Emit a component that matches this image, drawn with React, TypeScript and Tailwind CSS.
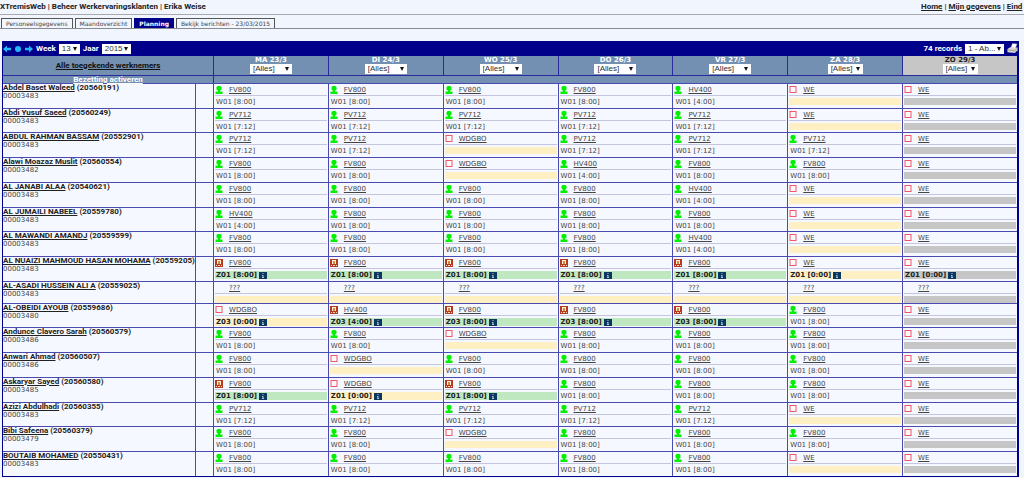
import { clsx } from "clsx";

type Status = "present" | "absent" | "free" | "none";

type Entry = {
  status: Status;
  code: string;
  hours?: string;
  booked?: boolean;
};

type Employee = {
  name: string;
  id: string;
  unit: string;
  days: Entry[];
};

const work = (code: string, time: string): Entry => ({ status: "present", code, hours: `W01 [${time}]` });
const sick = (code: string, hours: string): Entry => ({ status: "absent", code, hours, booked: true });
const free = (code: string, hours?: string): Entry => ({ status: "free", code, hours, booked: true });

const fv = work("FV800", "8:00");
const pv = work("PV712", "7:12");
const hv = work("HV400", "4:00");
const we = free("WE");
const wd = free("WDGBO");
const unknown: Entry = { status: "none", code: "???" };
const z01 = sick("FV800", "Z01 [8:00]");
const z03 = sick("FV800", "Z03 [8:00]");

const employees: Employee[] = [
  { name: "Abdel Baset Waleed", id: "20560191", unit: "00003483", days: [fv, fv, fv, fv, hv, we, we] },
  { name: "Abdi Yusuf Saeed", id: "20560249", unit: "00003483", days: [pv, pv, pv, pv, pv, we, we] },
  { name: "ABDUL RAHMAN BASSAM", id: "20552901", unit: "00003483", days: [pv, pv, wd, pv, pv, pv, we] },
  { name: "Alawi Moazaz Muslit", id: "20560554", unit: "00003482", days: [fv, fv, wd, hv, fv, fv, we] },
  { name: "AL JANABI ALAA", id: "20540621", unit: "00003483", days: [fv, fv, fv, fv, hv, we, we] },
  { name: "AL JUMAILI NABEEL", id: "20559780", unit: "00003483", days: [hv, fv, fv, fv, fv, we, we] },
  { name: "AL MAWANDI AMANDJ", id: "20559599", unit: "00003483", days: [fv, fv, fv, fv, hv, we, we] },
  {
    name: "AL NUAIZI MAHMOUD HASAN MOHAMA",
    id: "20559205",
    unit: "00003483",
    days: [z01, z01, z01, z01, z01, free("WE", "Z01 [0:00]"), free("WE", "Z01 [0:00]")],
  },
  {
    name: "AL-ASADI HUSSEIN ALI A",
    id: "20559025",
    unit: "00003483",
    days: [unknown, unknown, unknown, unknown, unknown, unknown, unknown],
  },
  {
    name: "AL-OBEIDI AYOUB",
    id: "20559686",
    unit: "00003480",
    days: [free("WDGBO", "Z03 [0:00]"), sick("HV400", "Z03 [4:00]"), z03, z03, z03, fv, we],
  },
  { name: "Andunce Clavero Sarah", id: "20560579", unit: "00003486", days: [fv, fv, wd, fv, fv, fv, we] },
  { name: "Anwari Ahmad", id: "20560507", unit: "00003486", days: [fv, wd, fv, fv, fv, fv, we] },
  {
    name: "Askaryar Sayed",
    id: "20560580",
    unit: "00003485",
    days: [z01, free("WDGBO", "Z01 [0:00]"), z01, fv, fv, fv, we],
  },
  { name: "Azizi Abdulhadi", id: "20560355", unit: "00003483", days: [pv, pv, pv, pv, pv, we, we] },
  { name: "Bibi Safeena", id: "20560379", unit: "00003479", days: [fv, fv, wd, fv, fv, fv, we] },
  { name: "BOUTAIB MOHAMED", id: "20550431", unit: "00003483", days: [fv, fv, fv, fv, fv, we, we] },
];

const days = ["MA 23/3", "DI 24/3", "WO 25/3", "DO 26/3", "VR 27/3", "ZA 28/3", "ZO 29/3"];
const tabs = ["Personeelsgegevens", "Maandoverzicht", "Planning", "Bekijk berichten - 23/03/2015"];

const StatusIcon = ({ status }: { status: Status }) => {
  if (status === "none") return <span className="w-[8px]" />;
  return (
    <svg viewBox="0 0 8 8" className="size-[8px] shrink-0" aria-hidden>
      {status === "present" && (
        <g fill="#00f000">
          <rect x="1.500" width="5" height="4.500" rx="1.500" />
          <path d="M3 4h2v1.500h2.500V8h-7V5.500H3z" />
        </g>
      )}
      {status === "free" && <rect x="1" y=".5" width="6" height="6" fill="#fff8f8" stroke="#f0556a" />}
      {status === "absent" && (
        <g shapeRendering="crispEdges">
          <rect width="8" height="8" fill="#b5391c" />
          <path d="M2 1h4v4H2z" fill="#fff3d8" />
          <path d="M3 2h2v3H3z" fill="#d08a48" />
          <path d="M1 6h1v1H1zM6 6h1v1H6zM3 6h2v1H3z" fill="#f6d9b8" />
        </g>
      )}
    </svg>
  );
};

const InfoIcon = () => (
  <svg viewBox="0 0 8 7" className="h-[7px] w-[8px]" aria-hidden>
    <rect width="8" height="7" fill="#0c3860" />
    <path d="M3.500 1h1v1h-1zM3 3h1.500v2H5v1H3V5h.5V4H3z" fill="#a8c4dc" />
  </svg>
);

const Arrow = ({ kind }: { kind: "left" | "dot" | "right" }) => (
  <svg viewBox="0 0 8 8" className="size-[8px]" fill="#22b8f8" aria-hidden>
    {kind === "left" && <path d="M0 4 4 .5v2.300h4v2.400H4v2.300z" />}
    {kind === "dot" && <circle cx="4" cy="4" r="3" />}
    {kind === "right" && <path d="M8 4 4 .5v2.300H0v2.400h4v2.300z" />}
  </svg>
);

const Printer = () => (
  <svg viewBox="0 0 12 12" className="size-[11px]" aria-hidden>
    <path d="M4 5.500 6 .5l5 .5-2 5z" fill="#fff" stroke="#99a" strokeWidth=".5" />
    <path d="M.5 6.500 3.500 4.500 11.500 5v3L8.500 11 .5 10z" fill="#d4d4d0" />
    <path d="M1 7.500 8.500 8.500 11 6" fill="none" stroke="#777" strokeWidth=".6" />
  </svg>
);

const Select = ({ label, value, className }: { label: string; value: string; className: string }) => (
  <span className={clsx("relative inline-block h-[10px] bg-white text-[#333]", className)}>
    <select
      aria-label={label}
      className="block h-[10px] w-full appearance-none overflow-hidden pl-[3px] font-['Liberation_Sans',sans-serif] text-[8px] leading-[10px] font-normal"
    >
      <option>{value}</option>
    </select>
    <svg viewBox="0 0 4 4" className="pointer-events-none absolute top-[3px] right-[3px] size-[4px]" aria-hidden>
      <path d="M0 0h4L2 4z" fill="#111" />
    </svg>
  </span>
);

const DayCell = ({ entry, sunday }: { entry: Entry; sunday: boolean }) => {
  const plain = entry.status === "present";
  return (
    <td className="border-t border-l border-[#4a4ab0] p-0 pr-px pl-px align-top">
      <div className="flex h-[12px] items-center gap-[6px] border-b border-[#c5c5e0]">
        <StatusIcon status={entry.status} />
        <a href="#" className="underline">
          {entry.code}
        </a>
      </div>
      <div
        className={clsx(
          "mt-[2px] flex items-center gap-[2px] pl-px",
          entry.hours ? "h-[8px]" : "h-[7px]",
          entry.booked && entry.hours && "font-bold text-[#222]",
          !plain && sunday && "bg-[#c6c6c6]",
          !plain && !sunday && (entry.status === "absent" ? "bg-[#c0e8c0]" : "bg-[#fff0c4]"),
        )}
      >
        {entry.hours}
        {entry.booked && entry.hours && <InfoIcon />}
      </div>
    </td>
  );
};

export default function App() {
  return (
    <div className="min-h-screen overflow-hidden bg-[#f0f5fe] font-['DejaVu_Sans',sans-serif] text-[7px] leading-[8px] text-[#444]">
      <header className="flex h-[15px] items-center justify-between border-b border-[#a8a8b0] font-['Roboto',sans-serif] text-[8px] font-bold whitespace-nowrap text-[#222]">
        <h1>XTremisWeb | Beheer Werkervaringsklanten | Erika Weise</h1>
        <nav className="w-[103px] overflow-hidden">
          <a href="#" className="underline">Home</a> | <a href="#" className="underline">Mijn gegevens</a> |{" "}
          <a href="#" className="underline">Eind</a>
        </nav>
      </header>

      <div className="flex h-[14px] items-end gap-[2px] border-b border-[#8a8a94] pl-px text-[6px]">
        {tabs.map((tab) => (
          <button
            key={tab}
            className={clsx(
              "h-[10px] border border-b-0 px-[4px] leading-[8px] whitespace-nowrap",
              tab === "Planning" ? "border-[#00008b] bg-[#00008b] font-bold text-white" : "border-[#555]",
            )}
          >
            {tab}
          </button>
        ))}
      </div>

      <main className="mt-[12px] mr-[5px] ml-[2px]">
        <div className="flex h-[15px] items-center justify-between bg-[#00008b] font-['Roboto',sans-serif] text-[8px] font-bold text-white">
          <div className="flex items-center gap-[3px] pl-px">
            <Arrow kind="left" />
            <Arrow kind="dot" />
            <Arrow kind="right" />
            <span>Week</span>
            <Select label="Week" value="13" className="w-[21px]" />
            <span>Jaar</span>
            <Select label="Jaar" value="2015" className="w-[29px]" />
          </div>
          <div className="flex items-center gap-[3px] pr-px">
            <span>74 records</span>
            <Select label="Pagina" value="1 - Ab..." className="w-[39px]" />
            <button aria-label="Afdrukken">
              <Printer />
            </button>
          </div>
        </div>

        <table className="w-full table-fixed border-separate border-spacing-0 border-r-2 border-b border-l border-[#00008b] bg-[#f6f8ff]">
          <colgroup>
            <col className="w-[192px]" />
            <col className="w-[18px]" />
            {days.map((day) => (
              <col key={day} />
            ))}
          </colgroup>
          <thead className="bg-[#7390b2]">
            <tr className="h-[19px]">
              <th colSpan={2} className="p-0 font-['Roboto',sans-serif] text-[8px] text-[#111]">
                <a href="#" className="underline">Alle toegekende werknemers</a>
              </th>
              {days.map((day, i) => (
                <th
                  key={day}
                  className={clsx(
                    "border-l border-[#2a2a98] p-0 align-top",
                    i === 6 ? "bg-[#c6c6c6] text-[#222]" : "text-white",
                  )}
                >
                  <div className="flex flex-col items-center">
                    <span>{day}</span>
                    <Select label={day} value="[Alles]" className={i < 5 ? "w-[42px]" : "w-[35px]"} />
                  </div>
                </th>
              ))}
            </tr>
            <tr className="h-[8px]">
              <th
                colSpan={2}
                className="border-t border-[#2a2a98] p-0 font-['Roboto',sans-serif] text-[8px] leading-[7px] text-white"
              >
                <a href="#" className="underline">Bezetting activeren</a>
              </th>
              <td colSpan={7} className="border-t border-l border-[#2a2a98] p-0" />
            </tr>
          </thead>
          <tbody>
            {employees.map((employee) => (
              <tr
                key={employee.id}
                className={employee.days[0].status === "none" ? "h-[22px]" : "h-[25px] nth-[4n+2]:h-[24px]"}
              >
                <td className="border-t border-[#4a4ab0] p-0 align-top whitespace-nowrap">
                  <div className="font-['Roboto',sans-serif] text-[8px] font-bold text-[#222]">
                    <a href="#" className="underline">{employee.name}</a> ({employee.id})
                  </div>
                  <div>{employee.unit}</div>
                </td>
                <td className="border-t border-l border-[#4a4ab0] p-0" />
                {employee.days.map((entry, i) => (
                  <DayCell key={days[i]} entry={entry} sunday={i === 6} />
                ))}
              </tr>
            ))}
          </tbody>
        </table>
      </main>
    </div>
  );
}
